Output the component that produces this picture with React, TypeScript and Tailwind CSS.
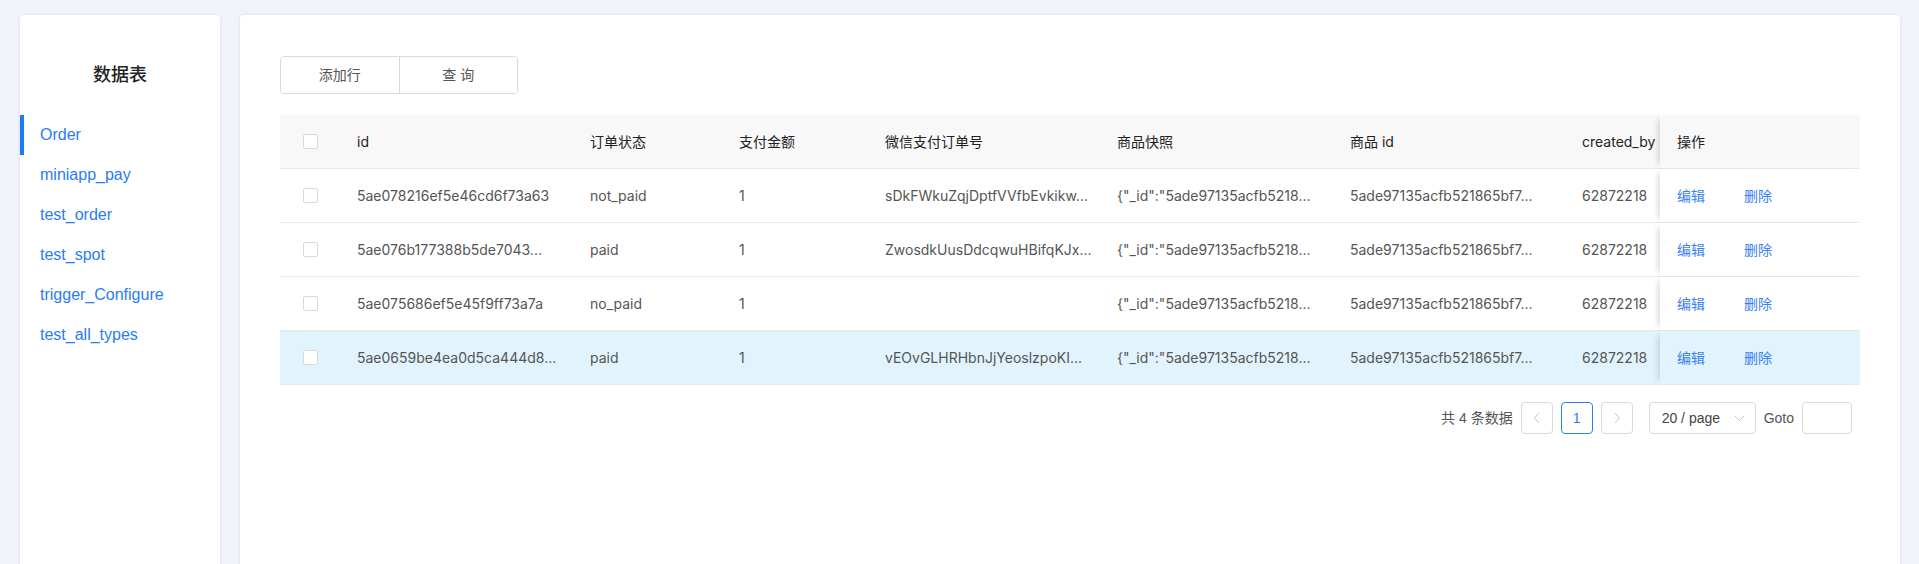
import React from "react";

const FONT = '"Helvetica Neue", "Liberation Sans", Arial, "Noto Sans CJK SC", sans-serif';
const TFONT = 'Inter, "Liberation Sans", Arial, "Noto Sans CJK SC", sans-serif';

const tables = ["Order", "miniapp_pay", "test_order", "test_spot", "trigger_Configure", "test_all_types"];

const rows = [
  {
    id: "5ae078216ef5e46cd6f73a63",
    status: "not_paid",
    amount: "1",
    wx: "sDkFWkuZqjDptfVVfbEvkikw...",
    snap: '{"_id":"5ade97135acfb5218...',
    goods: "5ade97135acfb521865bf7...",
    by: "62872218",
  },
  {
    id: "5ae076b177388b5de7043...",
    status: "paid",
    amount: "1",
    wx: "ZwosdkUusDdcqwuHBifqKJx...",
    snap: '{"_id":"5ade97135acfb5218...',
    goods: "5ade97135acfb521865bf7...",
    by: "62872218",
  },
  {
    id: "5ae075686ef5e45f9ff73a7a",
    status: "no_paid",
    amount: "1",
    wx: "",
    snap: '{"_id":"5ade97135acfb5218...',
    goods: "5ade97135acfb521865bf7...",
    by: "62872218",
  },
  {
    id: "5ae0659be4ea0d5ca444d8...",
    status: "paid",
    amount: "1",
    wx: "vEOvGLHRHbnJjYeoslzpoKI...",
    snap: '{"_id":"5ade97135acfb5218...',
    goods: "5ade97135acfb521865bf7...",
    by: "62872218",
  },
];

function Checkbox() {
  return <span className="block h-[15px] w-[15px] rounded-[2px] border border-[#d9d9d9] bg-white" />;
}

function Cell({ w, children, className = "" }: { w: string; children?: React.ReactNode; className?: string }) {
  return (
    <div className={`${w} shrink-0 overflow-hidden whitespace-nowrap pl-4 ${className}`}>{children}</div>
  );
}

function Columns({ r }: { r: { id: string; status: string; amount: string; wx: string; snap: string; goods: string; by: string } }) {
  return (
    <>
      <div className="flex w-[61px] shrink-0 justify-center">
        <Checkbox />
      </div>
      <Cell w="w-[233px]">{r.id}</Cell>
      <Cell w="w-[149px]">{r.status}</Cell>
      <Cell w="w-[146px]">{r.amount}</Cell>
      <Cell w="w-[232px]">{r.wx}</Cell>
      <Cell w="w-[233px]">{r.snap}</Cell>
      <Cell w="w-[232px]">{r.goods}</Cell>
      <Cell w="w-[94px]">{r.by}</Cell>
    </>
  );
}

export default function App() {
  return (
    <div
      className="flex min-h-[564px] gap-5 bg-[#f1f3fb] pl-5 pr-[19px] pt-[15px]"
      style={{ fontFamily: FONT }}
    >
      {/* Sidebar */}
      <aside className="h-[600px] w-[200px] shrink-0 rounded-[4px] bg-white pt-[45px] shadow-[0_0_3px_rgba(40,70,140,0.15)]">
        <h2 className="text-center text-[18px] font-medium leading-[30px] text-[#222]">数据表</h2>
        <ul className="mt-[25px]">
          {tables.map((t, i) => (
            <li
              key={t}
              className={`flex h-10 items-center border-l-4 pl-4 text-[16px] text-[#2a7cf4] ${
                i === 0 ? "border-[#1a7af8]" : "border-transparent"
              }`}
            >
              {t}
            </li>
          ))}
        </ul>
      </aside>

      {/* Main */}
      <main className="h-[600px] flex-1 rounded-[4px] bg-white px-10 pt-[41px] shadow-[0_0_3px_rgba(40,70,140,0.15)]">
        <div className="flex h-[38px] w-[238px] overflow-hidden rounded-[4px] border border-[#d9d9d9] text-[14px] text-[#555]">
          <button className="flex-1 border-r border-[#d9d9d9] bg-white">添加行</button>
          <button className="flex-1 bg-white">查 询</button>
        </div>

        <div className="mt-[21px] w-[1580px] text-[14px]" style={{ fontFamily: TFONT }}>
          {/* Header */}
          <div className="flex h-[54px] items-center border-b border-[#e8e8e8] bg-[#f8f8f8] text-[#222]">
            <Columns
              r={{
                id: "id",
                status: "订单状态",
                amount: "支付金额",
                wx: "微信支付订单号",
                snap: "商品快照",
                goods: "商品 id",
                by: "created_by",
              }}
            />
            <div className="flex h-full w-[200px] shrink-0 items-center bg-[#f8f8f8] pl-[17px] shadow-[-6px_0_6px_-4px_rgba(0,0,0,0.15)]">
              操作
            </div>
          </div>
          {rows.map((r, i) => {
            const bg = i === 3 ? "bg-[#e1f4fd]" : "bg-white";
            return (
              <div
                key={i}
                className={`flex h-[54px] items-center border-b border-[#e8e8e8] text-[#555] ${bg}`}
              >
                <Columns r={r} />
                <div
                  className={`flex h-full w-[200px] shrink-0 items-center gap-[39px] pl-[17px] text-[#3b7ff0] shadow-[-6px_0_6px_-4px_rgba(0,0,0,0.15)] ${bg}`}
                >
                  <a className="cursor-pointer">编辑</a>
                  <a className="cursor-pointer">删除</a>
                </div>
              </div>
            );
          })}
        </div>

        {/* Pagination */}
        <div className="mt-[17px] flex w-[1580px] items-center justify-end pr-2 text-[14px] text-[#555]">
          <span className="mr-2">共 4 条数据</span>
          <button className="mr-2 flex h-8 w-8 items-center justify-center rounded-[4px] border border-[#d9d9d9] text-[#c4c4c4]">
            <svg width="8" height="12" viewBox="0 0 8 12" fill="none">
              <path d="M6 1L1.5 6L6 11" stroke="currentColor" strokeWidth="1" />
            </svg>
          </button>
          <button className="mr-2 flex h-8 w-8 items-center justify-center rounded-[4px] border border-[#2a7cf4] text-[#2a7cf4]">
            1
          </button>
          <button className="mr-4 flex h-8 w-8 items-center justify-center rounded-[4px] border border-[#d9d9d9] text-[#c4c4c4]">
            <svg width="8" height="12" viewBox="0 0 8 12" fill="none">
              <path d="M2 1L6.5 6L2 11" stroke="currentColor" strokeWidth="1" />
            </svg>
          </button>
          <div className="mr-2 flex h-8 w-[107px] items-center justify-between rounded-[4px] border border-[#d9d9d9] pl-[12px] pr-[10px] text-[#444]">
            <span>20 / page</span>
            <svg width="11" height="7" viewBox="0 0 11 7" fill="none" className="text-[#c4c4c4]">
              <path d="M1 1L5.5 5.5L10 1" stroke="currentColor" strokeWidth="1" />
            </svg>
          </div>
          <span className="mr-2">Goto</span>
          <input className="h-8 w-[50px] rounded-[4px] border border-[#d9d9d9] outline-none" />
        </div>
      </main>
    </div>
  );
}
